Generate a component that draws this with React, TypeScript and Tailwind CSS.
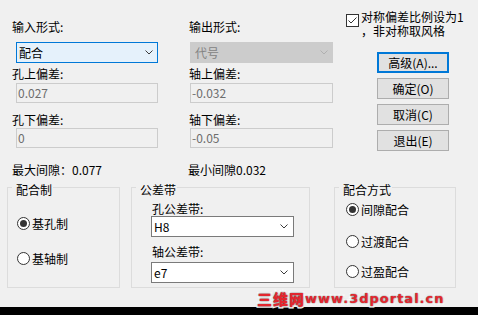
import React from "react";

function Chevron({ color = "#3c3c3c" }: { color?: string }) {
  return (
    <svg width="8" height="5" viewBox="0 0 8 5">
      <path d="M0.5 0.5 L4 4 L7.5 0.5" fill="none" stroke={color} strokeWidth="1" />
    </svg>
  );
}

function Radio({ checked }: { checked?: boolean }) {
  return (
    <svg width="13" height="13" viewBox="0 0 13 13" className="shrink-0">
      <circle cx="6.5" cy="6.5" r="6" fill="#ffffff" stroke="#333333" strokeWidth="1" />
      {checked && <circle cx="6.5" cy="6.5" r="3.5" fill="#333333" />}
    </svg>
  );
}

function Label({ children, cls = "" }: { children: React.ReactNode; cls?: string }) {
  return <div className={`h-[16px] leading-[16px] whitespace-nowrap ${cls}`}>{children}</div>;
}

function ReadOnly({ value }: { value: string }) {
  return (
    <div className="h-[20px] border border-[#cccccc] bg-[#f0f0f0] pl-[1px] leading-[18px] text-[#6d6d6d]">
      {value}
    </div>
  );
}

function Group({
  title,
  cls,
  children,
}: {
  title: string;
  cls: string;
  children: React.ReactNode;
}) {
  return (
    <div className={`relative h-[101px] border border-[#dcdcdc] ${cls}`}>
      <span className="absolute left-[4px] top-[-6px] bg-[#f0f0f0] pl-[4px] pr-[1px] leading-[16px]">
        {title}
      </span>
      {children}
    </div>
  );
}

function RadioRow({ label, checked, cls = "" }: { label: string; checked?: boolean; cls?: string }) {
  return (
    <div className={`flex h-[13px] items-center gap-[2px] ${cls}`}>
      <Radio checked={checked} />
      <span className="leading-[16px]">{label}</span>
    </div>
  );
}

function Button({ children, def }: { children: React.ReactNode; def?: boolean }) {
  return (
    <div
      className={`flex h-[21px] w-[72px] items-center justify-center bg-[#e1e1e1] leading-[16px] ${
        def ? "border-2 border-[#0078d7]" : "border border-[#adadad]"
      }`}
    >
      {children}
    </div>
  );
}

export default function App() {
  return (
    <div className="relative flex h-[315px] w-[478px] flex-col overflow-hidden bg-[#f0f0f0] font-['Noto_Sans_CJK_SC',sans-serif] text-[12px] text-black">
      {/* top row */}
      <div className="flex h-[152px]">
        {/* column 1 */}
        <div className="ml-[12px] flex w-[146px] flex-col pt-[19px]">
          <Label>输入形式:</Label>
          <div className="ml-[4px] mt-[7px] flex h-[21px] items-center justify-between border border-[#0078d7] bg-[#e5f1fb] pl-[2px] pr-[4px]">
            <span className="leading-[16px]">配合</span>
            <Chevron />
          </div>
          <Label cls="mt-[3px]">孔上偏差:</Label>
          <div className="ml-[4px] mt-[1px]">
            <ReadOnly value="0.027" />
          </div>
          <Label cls="mt-[9px]">孔下偏差:</Label>
          <div className="ml-[4px]">
            <ReadOnly value="0" />
          </div>
        </div>
        {/* column 2 */}
        <div className="ml-[31px] flex w-[144px] flex-col pt-[19px]">
          <Label>输出形式:</Label>
          <div className="ml-[1px] mt-[7px] flex h-[21px] items-center justify-between border border-[#cccccc] bg-[#cccccc] pl-[4px] pr-[4px] text-[#838383]">
            <span className="leading-[16px]">代号</span>
            <Chevron color="#b0b0b0" />
          </div>
          <Label cls="mt-[3px]">轴上偏差:</Label>
          <div className="ml-[1px] mt-[1px]">
            <ReadOnly value="-0.032" />
          </div>
          <Label cls="mt-[9px]">轴下偏差:</Label>
          <div className="ml-[1px]">
            <ReadOnly value="-0.05" />
          </div>
        </div>
        {/* column 3 */}
        <div className="ml-[13px] flex flex-col pt-[10px]">
          <div className="flex">
            <div className="mt-[4px] flex h-[13px] w-[13px] items-center justify-center border border-[#333333] bg-white">
              <svg width="11" height="11" viewBox="0 0 11 11">
                <path d="M1.5 5.5 L4 8 L9.5 2.5" fill="none" stroke="#333333" strokeWidth="1" />
              </svg>
            </div>
            <div className="ml-[2px] flex flex-col whitespace-nowrap">
              <div className="h-[14px] leading-[14px]">对称偏差比例设为1</div>
              <div className="h-[14px] leading-[14px]">，非对称取风格</div>
            </div>
          </div>
          <div className="ml-[31px] mt-[14px] flex flex-col gap-[5px]">
            <Button def>高级(A)...</Button>
            <Button>确定(O)</Button>
            <Button>取消(C)</Button>
            <Button>退出(E)</Button>
          </div>
        </div>
      </div>

      {/* gap row */}
      <div className="mt-[10px] flex h-[16px] leading-[16px]">
        <div className="ml-[12px] w-[176px] whitespace-nowrap">最大间隙：0.077</div>
        <div className="whitespace-nowrap">最小间隙0.032</div>
      </div>

      {/* group row */}
      <div className="mt-[9px] flex items-start">
        <Group title="配合制" cls="ml-[7px] w-[113px] pl-[9px] pt-[29px]">
          <RadioRow label="基孔制" checked />
          <RadioRow label="基轴制" cls="mt-[22px]" />
        </Group>
        <Group title="公差带" cls="ml-[11px] w-[179px] pl-[19px] pt-[14px]">
          <div className="ml-[1px] h-[14px] leading-[14px]">孔公差带:</div>
          <div className="flex h-[21px] w-[143px] items-center justify-between border border-[#7a7a7a] bg-white pl-[2px] pr-[5px]">
            <span className="leading-[16px]">H8</span>
            <Chevron />
          </div>
          <div className="ml-[1px] mt-[8px] h-[14px] leading-[14px]">轴公差带:</div>
          <div className="mt-[3px] flex h-[21px] w-[143px] items-center justify-between border border-[#7a7a7a] bg-white pl-[2px] pr-[5px]">
            <span className="leading-[16px]">e7</span>
            <Chevron />
          </div>
        </Group>
        <Group title="配合方式" cls="ml-[24px] w-[122px] pl-[11px] pt-[15px]">
          <RadioRow label="间隙配合" checked />
          <RadioRow label="过渡配合" cls="mt-[19px]" />
          <RadioRow label="过盈配合" cls="mt-[17px]" />
        </Group>
      </div>

      <div className="flex-1" />
      <div className="h-[8px] bg-black" />

      {/* watermark */}
      <div className="absolute left-[257px] top-[291px] flex items-end whitespace-nowrap font-black text-[#e3262e] [-webkit-text-stroke:3px_white] [paint-order:stroke_fill] [text-shadow:0_0_2px_#444]">
        <span className="text-[15px] leading-[16px] tracking-[1px]">三维网</span>
        <span className="font-['DejaVu_Sans',sans-serif] text-[13px] font-bold leading-[16px] tracking-[1px]">
          www.3dportal.cn
        </span>
      </div>
    </div>
  );
}
